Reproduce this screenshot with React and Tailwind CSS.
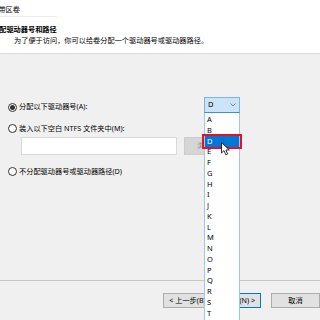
import React from 'react';

const letters = ['A', 'B', 'D', 'E', 'F', 'G', 'H', 'I', 'J', 'K', 'L', 'M', 'N', 'O', 'P', 'Q', 'R', 'S', 'T', 'U'];

const Radio = ({ checked }) => (
  <span className="w-[9px] h-[9px] rounded-full border border-[#333] bg-white flex items-center justify-center shrink-0">
    {checked && <span className="w-[5px] h-[5px] rounded-full bg-[#333]" />}
  </span>
);

const Cursor = () => (
  <svg width="10" height="14" viewBox="0 0 10 14" className="absolute left-[16px] top-[29px]">
    <path d="M0.5 0.5 L0.5 11 L3 8.6 L4.8 12.8 L6.6 12 L4.9 8 L8.3 8 Z" fill="#fff" stroke="#000" strokeWidth="0.8" strokeLinejoin="round" />
  </svg>
);

export default function App() {
  return (
    <div
      className="w-[320px] h-[320px] overflow-hidden bg-[#f0f0f0] text-black flex flex-col text-[7.2px] leading-none"
      style={{ fontFamily: '"Noto Sans", "Noto Sans CJK SC", sans-serif' }}
    >
      {/* Header */}
      <div className="h-[54px] bg-white border-b border-[#dcdcdc] shrink-0 flex flex-col">
        <div className="mt-[6px] ml-[-16px] whitespace-nowrap">新建带区卷</div>
        <div className="mt-[3px] h-px w-[57px] bg-[#ececec]" />
        <div className="mt-[9px] ml-[-8px] font-bold whitespace-nowrap">分配驱动器号和路径</div>
        <div className="mt-[4px] ml-[14px] whitespace-nowrap">为了便于访问，你可以给卷分配一个驱动器号或驱动器路径。</div>
      </div>

      {/* Body */}
      <div className="flex-1 flex flex-col pl-[8px]">
        <div className="mt-[43px] h-[16px] flex items-center">
          <div className="w-[196px] flex items-center gap-[2px] pt-[4px]">
            <Radio checked />
            <span className="whitespace-nowrap">分配以下驱动器号(A):</span>
          </div>
          <div className="relative">
            <div className="w-[36px] h-[16px] bg-[#cce4f7] border border-[#7ab5e6] border-b-[#3d8ee0] flex items-center justify-between pl-[3px] pr-[3px] text-[7.5px]">
              <span>D</span>
              <svg width="6" height="4" viewBox="0 0 6 4">
                <path d="M0.5 0.5 L3 3 L5.5 0.5" fill="none" stroke="#666" strokeWidth="0.8" />
              </svg>
            </div>
            {/* Open list */}
            <div className="absolute left-0 top-[16px] w-[36px] h-[220px] bg-white border border-[#99c9ef] border-t-0 pt-[1.5px] z-10 text-[7.5px]">
              {letters.map((l) => (
                <div
                  key={l}
                  className={`h-[10.75px] flex items-center pl-[2px] ${l === 'D' ? 'bg-[#0078d7] text-white' : ''}`}
                >
                  {l}
                </div>
              ))}
              <div className="absolute left-[-3px] top-[21px] w-[40px] h-[15px] border-2 border-[#e81123]" />
              <Cursor />
            </div>
          </div>
        </div>

        <div className="mt-[11px] flex items-center gap-[2px]">
          <Radio />
          <span className="whitespace-nowrap">装入以下空白 NTFS 文件夹中(M):</span>
        </div>

        <div className="mt-[4px] ml-[13px] flex gap-[7px]">
          <div className="w-[156px] h-[18px] bg-white border border-[#d9d9d9]" />
          <div className="w-[55px] h-[18px] bg-[#d6d6d6] border border-[#cccccc] flex items-center pl-[12px] text-[#888]">
            浏览(R)...
          </div>
        </div>

        <div className="mt-[12px] flex items-center gap-[2px]">
          <Radio />
          <span className="whitespace-nowrap">不分配驱动器号或驱动器路径(D)</span>
        </div>
      </div>

      {/* Footer */}
      <div className="h-[40px] shrink-0 border-t border-[#c8c8c8] flex items-start pt-[12px] pl-[163px]">
        <button className="w-[55px] h-[15px] bg-[#e1e1e1] border border-[#adadad] flex items-center justify-center whitespace-nowrap">
          &lt; 上一步(B)
        </button>
        <button className="w-[55px] h-[15px] bg-[#e1e1e1] border border-[#0078d7] flex items-center justify-center whitespace-nowrap">
          下一步(N) &gt;
        </button>
        <button className="ml-[10px] w-[55px] h-[15px] bg-[#e1e1e1] border border-[#adadad] flex items-center justify-center whitespace-nowrap">
          取消
        </button>
      </div>
    </div>
  );
}
